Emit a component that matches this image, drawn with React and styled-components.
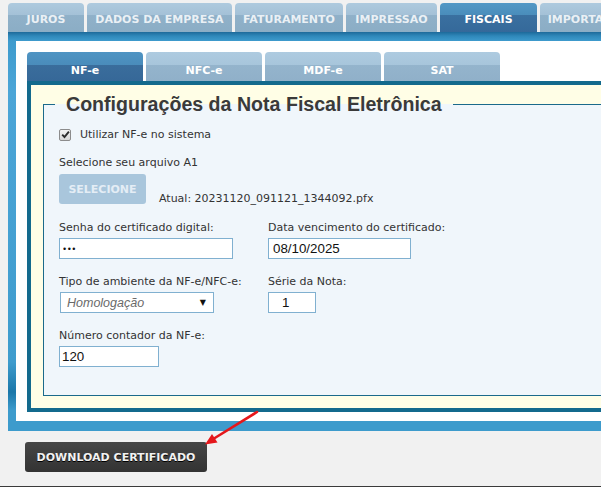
import React from 'react';
import styled, { createGlobalStyle } from 'styled-components';

const GlobalStyle = createGlobalStyle`
  html, body { margin: 0; padding: 0; }
  body {
    background: #f1f1f1;
    overflow: hidden;
    font-family: "DejaVu Sans", Verdana, sans-serif;
    font-size: 11px;
    color: #333;
  }
`;

const Page = styled.div`
  position: relative;
  width: 680px;
  height: 487px;
  box-sizing: border-box;
  padding-left: 8px;
  border-bottom: 1px solid #3a3a3a;
`;

const MainTabs = styled.div`
  display: flex;
  gap: 3px;
  padding-top: 3px;
`;

const MainTab = styled.div`
  flex: none;
  width: ${({ $w }) => $w}px;
  height: 29px;
  box-sizing: border-box;
  padding-top: 3px;
  display: flex;
  align-items: center;
  justify-content: center;
  border-radius: 4px 4px 0 0;
  font-weight: bold;
  font-size: 11px;
  white-space: nowrap;
  overflow: hidden;
  color: ${({ $active }) => ($active ? '#ffffff' : '#eaf0f5')};
  background: ${({ $active }) =>
    $active
      ? 'linear-gradient(180deg, #5298c6 0%, #4a8dbb 41%, #3a70a0 41%, #35699a 100%)'
      : 'linear-gradient(180deg, #aecade 0%, #a4c1d7 41%, #90b1c9 41%, #8badc5 100%)'};
`;

const OuterPanel = styled.div`
  padding: 9px 0 10px 8px;
  background: linear-gradient(
    180deg,
    #1d6a9a 0px,
    #2f88ba 4px,
    #3e9bcd 9px,
    #4ca5d7 60px,
    #3f9ccd 330px,
    #1b77a9 360px,
    #3d9bcc 378px,
    #3d9bcc 100%
  );
`;

const WhiteArea = styled.div`
  background: #ffffff;
  padding: 11px 0 9px 11px;
`;

const SubTabs = styled.div`
  display: flex;
  gap: 3px;
`;

const SubTab = styled.div`
  flex: none;
  width: 116px;
  height: 29px;
  box-sizing: border-box;
  padding-top: 7px;
  display: flex;
  align-items: center;
  justify-content: center;
  border-radius: 4px 4px 0 0;
  font-weight: bold;
  font-size: 11px;
  color: #ffffff;
  background: ${({ $active }) =>
    $active
      ? 'linear-gradient(180deg, #4f94c3 0%, #4a8cbb 45%, #3a6d9c 45%, #366898 100%)'
      : 'linear-gradient(180deg, #aecbe0 0%, #a7c5db 45%, #94b4cc 45%, #90b0c9 100%)'};
`;

const InnerPanel = styled.div`
  border-top: 4px solid #136a8d;
  border-left: 4px solid #136a8d;
  border-bottom: 4px solid #136a8d;
  background: #fffee6;
  padding: 8px 0 12px 12px;
`;

const Fieldset = styled.fieldset`
  margin: 0;
  min-width: 0;
  border: 1px solid #1b6a8b;
  border-right: none;
  background: #f0f6fb;
  padding: 0 0 28px 11px;
`;

const Legend = styled.legend`
  padding: 0 11px 0 11px;
  font-family: "Liberation Sans", Arial, sans-serif;
  font-weight: bold;
  font-size: 19.6px;
  line-height: 23px;
  color: #3a3a3a;
`;

const Body = styled.div`
  padding-left: 4px;
`;

const CheckRow = styled.label`
  display: flex;
  align-items: center;
  gap: 9px;
  margin-top: 11px;
  line-height: 15px;
`;

const CheckBox = styled.span`
  width: 12px;
  height: 12px;
  box-sizing: border-box;
  border: 1px solid #8c8c8c;
  border-radius: 2px;
  background: linear-gradient(180deg, #f2f2f2, #d6d6d6);
  display: flex;
  align-items: center;
  justify-content: center;
`;

const Text = styled.div`
  line-height: 15px;
  margin-top: ${({ $mt }) => $mt || 0}px;
`;

const FileRow = styled.div`
  display: flex;
  align-items: flex-end;
  margin-top: 4px;
`;

const PickButton = styled.button`
  width: 87px;
  height: 30px;
  border: none;
  border-radius: 3px;
  background: #a9c6dc;
  color: #e4edf5;
  font-family: "DejaVu Sans", Verdana, sans-serif;
  font-weight: bold;
  font-size: 11px;
  padding: 0;
`;

const Current = styled.span`
  margin-left: 13px;
  margin-bottom: -2px;
  line-height: 15px;
`;

const FieldGrid = styled.div`
  display: grid;
  grid-template-columns: 209px auto;
  row-gap: 15px;
  margin-top: 16px;
  justify-items: start;
`;

const Field = styled.div`
  display: flex;
  flex-direction: column;
  align-items: flex-start;
  margin-top: ${({ $mt }) => $mt || 0}px;
`;

const FieldLabel = styled.span`
  line-height: 15px;
  margin-bottom: 3px;
`;

const Input = styled.input`
  width: ${({ $w }) => $w}px;
  height: 21px;
  box-sizing: border-box;
  border: 1px solid #80b0d0;
  background: #ffffff;
  padding: 0 0 0 ${({ $pl }) => $pl || 3}px;
  margin: 0;
  font-family: "Liberation Sans", Arial, sans-serif;
  font-size: ${({ $fs }) => $fs || 13.33}px;
  letter-spacing: ${({ $ls }) => $ls || 0}px;
  color: #111;
  outline: none;
`;

const SelectBox = styled.div`
  width: 154px;
  height: 21px;
  box-sizing: border-box;
  margin-left: 1px;
  border: 1px solid #80b0d0;
  background: #ffffff;
  display: flex;
  align-items: center;
  justify-content: space-between;
  padding: 0 7px 0 6px;
  font-family: "Liberation Sans", Arial, sans-serif;
  font-style: italic;
  font-size: 12.5px;
  color: #6a6a6a;
`;

const Caret = styled.span`
  font-family: "DejaVu Sans", sans-serif;
  font-style: normal;
  font-size: 8px;
  color: #111;
`;

const DownloadButton = styled.button`
  display: block;
  margin: 11px 0 0 17px;
  width: 182px;
  height: 30px;
  border: none;
  border-radius: 3px;
  background: linear-gradient(180deg, #464646, #333333);
  color: #f2f2f2;
  font-family: "DejaVu Sans", Verdana, sans-serif;
  font-weight: bold;
  font-size: 11px;
  text-shadow: 0 1px 0 #000;
  padding: 0;
`;

const Pointer = styled.svg`
  position: absolute;
  left: 200px;
  top: 406px;
`;

const mainTabs = [
  { name: 'JUROS', w: 76 },
  { name: 'DADOS DA EMPRESA', w: 145 },
  { name: 'FATURAMENTO', w: 108 },
  { name: 'IMPRESSAO', w: 91 },
  { name: 'FISCAIS', w: 97, active: true },
  { name: 'IMPORTAÇÃO', w: 97 },
];

const subTabs = ['NF-e', 'NFC-e', 'MDF-e', 'SAT'];

const App = () => {
  return (
    <Page>
      <GlobalStyle />
      <MainTabs>
        {mainTabs.map((t) => (
          <MainTab key={t.name} $w={t.w} $active={t.active}>
            {t.name}
          </MainTab>
        ))}
      </MainTabs>
      <OuterPanel>
        <WhiteArea>
          <SubTabs>
            {subTabs.map((t, i) => (
              <SubTab key={t} $active={i === 0}>
                {t}
              </SubTab>
            ))}
          </SubTabs>
          <InnerPanel>
            <Fieldset>
              <Legend>Configurações da Nota Fiscal Eletrônica</Legend>
              <Body>
                <CheckRow>
                  <CheckBox>
                    <svg width="9" height="9" viewBox="0 0 9 9">
                      <path d="M1.2 4.6 L3.5 7 L7.9 1.6" fill="none" stroke="#2b2b2b" strokeWidth="1.9" />
                    </svg>
                  </CheckBox>
                  Utilizar NF-e no sistema
                </CheckRow>
                <Text $mt={13}>Selecione seu arquivo A1</Text>
                <FileRow>
                  <PickButton>SELECIONE</PickButton>
                  <Current>Atual: 20231120_091121_1344092.pfx</Current>
                </FileRow>
                <FieldGrid>
                  <Field>
                    <FieldLabel>Senha do certificado digital:</FieldLabel>
                    <Input type="password" $w={174} $fs={9} $ls={1.5} defaultValue="123" />
                  </Field>
                  <Field>
                    <FieldLabel>Data vencimento do certificado:</FieldLabel>
                    <Input $w={143} $pl={4} defaultValue="08/10/2025" />
                  </Field>
                  <Field>
                    <FieldLabel>Tipo de ambiente da NF-e/NFC-e:</FieldLabel>
                    <SelectBox>
                      Homologação
                      <Caret>▼</Caret>
                    </SelectBox>
                  </Field>
                  <Field>
                    <FieldLabel>Série da Nota:</FieldLabel>
                    <Input $w={48} $pl={13} defaultValue="1" />
                  </Field>
                </FieldGrid>
                <Field $mt={15}>
                  <FieldLabel>Número contador da NF-e:</FieldLabel>
                  <Input $w={100} $pl={2} defaultValue="120" />
                </Field>
              </Body>
            </Fieldset>
          </InnerPanel>
        </WhiteArea>
      </OuterPanel>
      <DownloadButton>DOWNLOAD CERTIFICADO</DownloadButton>
      <Pointer width="64" height="44" viewBox="0 0 64 44">
        <line x1="57" y1="6" x2="14" y2="32.5" stroke="#e5171b" strokeWidth="2.6" strokeLinecap="round" />
        <polygon points="5,38.5 17.5,36.5 12,28" fill="#e5171b" />
      </Pointer>
    </Page>
  );
};

export default App;
